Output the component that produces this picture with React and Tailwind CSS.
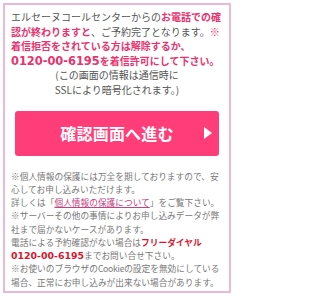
import React from "react";

const font = { fontFamily: '"Noto Sans CJK JP", "Noto Sans", sans-serif' };

function ConfirmButton() {
  return (
    <button
      type="button"
      className="relative mx-[4px] mt-[13px] flex h-[45px] w-[204px] items-center justify-center rounded-[3px] bg-[#ff3d78] text-white"
    >
      <span className="text-[16px] font-bold leading-none tracking-[0.2px]">確認画面へ進む</span>
      <svg
        className="absolute right-[7px] top-1/2 -translate-y-1/2"
        width="8"
        height="12"
        viewBox="0 0 8 12"
      >
        <polygon points="0,0 8,6 0,12" fill="#ffffff" />
      </svg>
    </button>
  );
}

export default function App() {
  return (
    <div className="h-[300px] w-[234px] bg-white p-[3px]" style={font}>
      <div className="h-[290px] border-2 border-[#ecbad0] px-[6px] pt-[5px]">
        {/* notice about the confirmation call */}
        <p className="text-[10px] leading-[14.6px] text-[#555]">
          エルセーヌコールセンターからの
          <span className="font-bold text-[#e8336e]">お電話での確認が終わりますと</span>
          、ご予約完了となります。
          <span className="font-bold text-[#e8336e]">
            ※着信拒否をされている方は解除するか、
            <br />
            <span className="font-[family-name:DejaVu_Sans] text-[11.4px]">0120-00-6195</span>
            を着信許可にして下さい。
          </span>
        </p>
        <p className="text-center text-[10px] leading-[14.6px] text-[#555]">
          (この画面の情報は通信時に
          <br />
          SSLにより暗号化されます。)
        </p>

        <ConfirmButton />

        <div className="mt-[14px] text-[8.7px] leading-[13.25px] text-[#777]">
          <p>※個人情報の保護には万全を期しておりますので、安心してお申し込みいただけます。</p>
          <p>
            詳しくは「
            <a href="#" className="text-[#c2417f] underline">個人情報の保護について</a>
            」をご覧下さい。
          </p>
          <p>※サーバーその他の事情によりお申し込みデータが弊社まで届かないケースがあります。</p>
          <p>
            電話による予約確認がない場合は
            <span className="font-bold text-[#d9152f]">フリーダイヤル</span>
            <br />
            <span className="font-[family-name:DejaVu_Sans] text-[9.4px] font-bold text-[#d9152f]">0120-00-6195</span>
            までお問い合せ下さい。
          </p>
          <p>
            ※お使いのブラウザの<span className="tracking-[-0.3px]">Cookie</span>
            の設定を無効にしている場合、正常にお申し込みが出来ない場合があります。
          </p>
        </div>
      </div>
    </div>
  );
}
